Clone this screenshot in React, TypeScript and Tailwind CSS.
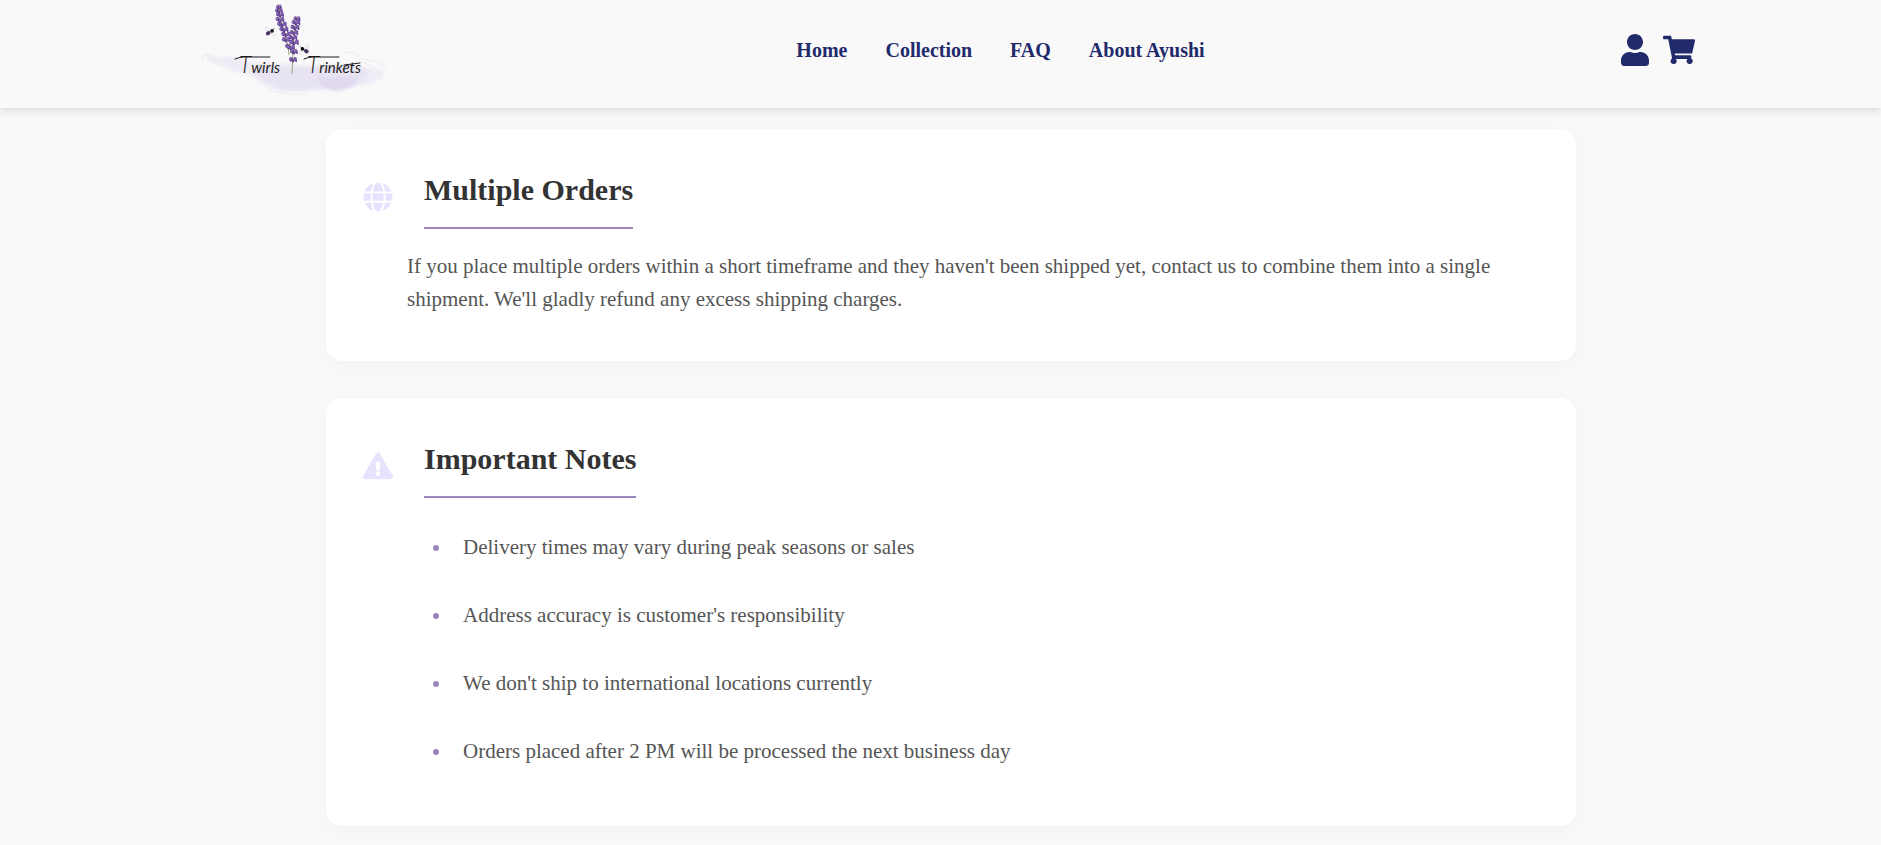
import type { ReactNode } from "react";
import { FaExclamationTriangle, FaGlobe, FaShoppingCart, FaUser } from "react-icons/fa";

const navLinks = ["Home", "Collection", "FAQ", "About Ayushi"];

const notes = [
  "Delivery times may vary during peak seasons or sales",
  "Address accuracy is customer's responsibility",
  "We don't ship to international locations currently",
  "Orders placed after 2 PM will be processed the next business day",
];

// Lavender whorls: centre x, centre y, half width
const whorls: [number, number, number][] = [
  [279, 7, 2.6],
  [279, 11, 3.8],
  [280, 15, 4],
  [280, 20, 4.4],
  [282, 25, 5],
  [284, 30, 4.6],
  [286, 35, 4.8],
  [286, 40, 4.2],
  [288, 46, 2.6],
  [297, 19, 3.4],
  [296, 23, 4.4],
  [295, 28, 4.6],
  [294, 33, 4.4],
  [293, 38, 4.4],
  [294, 43, 5],
  [291, 48, 4],
  [294, 52, 3.8],
  [293, 60, 4],
];

function Bee({ x, y, flip }: { x: number; y: number; flip?: boolean }) {
  return (
    <g transform={`translate(${x} ${y}) scale(${flip ? 1 : -1} 1) rotate(28)`}>
      <ellipse cx="1" cy="-3.6" rx="1.6" ry="3" fill="#f4f2f5" stroke="#d8d5db" strokeWidth="0.5" />
      <ellipse cx="-2" cy="3.6" rx="1.5" ry="3" fill="#f4f2f5" stroke="#d8d5db" strokeWidth="0.5" />
      <ellipse cx="2.2" cy="0.3" rx="2.5" ry="2" fill="#5b4478" />
      <path d="M2.6 -1.4v3.2M1 -1.3v2.8" stroke="#17131f" strokeWidth="0.5" />
      <circle cx="-2.3" cy="0" r="1.8" fill="#121018" />
      <path d="M-3.6 -0.4l-2 -0.8" stroke="#121018" strokeWidth="0.5" />
    </g>
  );
}

function Logo() {
  return (
    <svg viewBox="198 0 196 100" className="h-[100px] w-[196px]" role="img" aria-label="Twirls Trinkets">
      <defs>
        <filter id="wash" x="-10%" y="-10%" width="120%" height="120%">
          <feGaussianBlur stdDeviation="1.4" />
        </filter>
      </defs>
      <g filter="url(#wash)">
        <path
          d="M204 57c5-3 10 0 15 1c7-3 16-2 24 1c8 5 24 4 34 5c14-3 30 3 44 2c14 2 22-3 32 0c12 0 20 4 30 4c2 5 0 8-6 10c-8 6-22 6-31 9c-18-2-32 4-50 3c-14 0-22-1-29-5c-5-3-10-8-18-12c-12-2-22-7-31-10c-8-3-12-5-14-8z"
          fill="#efecf6"
        />
        <path
          d="M252 68c16-4 38 1 60-1c20-3 45-2 54 3c6 7-4 12-16 14c-14 6-24 4-36 4c-17 4-31 3-43-4c-9-4-19-9-19-16z"
          fill="#e7e3f2"
        />
        <path d="M318 76c12 3 28 0 40 3c-2 6-10 11-20 12c-11 0-18-5-20-15z" fill="#e0d9f0" />
      </g>
      <path
        d="M203 62c-4-8 6-9 13-5M342 54c8-4 16-1 19 5c9 1 22 3 26 10M358 60c6 4 12 4 18 8M268 90c14 5 26 4 40 4"
        fill="none"
        stroke="#eeebf5"
        strokeWidth="1"
      />

      <path d="M279 8c1 15 8 26 10 47M297 18c-4 14-4 32-5 56" fill="none" stroke="#9da37c" strokeWidth="1" />
      {whorls.map(([x, y, r]) => (
        <g key={`${x}-${y}`}>
          <ellipse cx={x - r * 0.5} cy={y + 0.3} rx={r * 0.55} ry="2.1" fill="#69479b" transform={`rotate(28 ${x} ${y})`} />
          <ellipse cx={x + r * 0.5} cy={y} rx={r * 0.55} ry="2" fill="#7a5aac" transform={`rotate(-24 ${x} ${y})`} />
          <circle cx={x - r * 0.7} cy={y - 1.2} r="0.9" fill="#9c83c4" />
          <circle cx={x + r * 0.8} cy={y + 1} r="0.9" fill="#56358a" />
          <circle cx={x} cy={y + 1.4} r="1" fill="#452a74" />
          <circle cx={x + 0.4} cy={y - 1.6} r="0.6" fill="#b7a77f" />
        </g>
      ))}
      <Bee x={270} y={32} flip={false} />
      <Bee x={304.5} y={50} flip />

      <g
        fill="#1d1b20"
        fontFamily="Lato, 'Liberation Sans', sans-serif"
        fontStyle="italic"
        fontSize="15"
      >
        <text x="239" y="73">
          <tspan fontSize="23" fontWeight="300">T</tspan>wirls
        </text>
        <text x="307" y="73">
          <tspan fontSize="23" fontWeight="300">T</tspan>rinkets
        </text>
      </g>
      <path
        d="M235 59q4-2 9-2h26M304 59q4-2 9-2h26M344 65l16-2"
        fill="none"
        stroke="#1d1b20"
        strokeWidth="1"
        strokeLinecap="round"
      />
    </svg>
  );
}

function Card({ icon, title, children }: { icon: ReactNode; title: string; children: ReactNode }) {
  return (
    <section className="rounded-2xl bg-white px-[37px] pt-9 pb-[45px] shadow-[0_4px_20px_rgba(0,0,0,0.03)]">
      <div className="flex items-center gap-[31px]">
        <span className="text-[30px] text-[#e8e2ff]">{icon}</span>
        <h2 className="border-b-2 border-[#9b86bd] pt-[3px] pb-[15px] text-[30px] leading-[44px] font-bold text-[#333333]">
          {title}
        </h2>
      </div>
      {children}
    </section>
  );
}

export default function App() {
  return (
    <div className="min-h-screen bg-[#f9f9f9] font-['Liberation_Serif',serif]">
      <header className="relative flex h-[108px] items-center justify-between bg-[#f9f9f9] pr-[186px] pl-[198px] shadow-[0_4px_8px_rgba(0,0,0,0.1)]">
        <a href="#" className="-mr-3 self-start">
          <Logo />
        </a>
        <nav className="mb-2 flex gap-[38px] text-[20px] leading-6 font-bold text-[#212a6b]">
          {navLinks.map((label) => (
            <a key={label} href="#">
              {label}
            </a>
          ))}
        </nav>
        <div className="mb-2 flex items-center gap-3 text-[32px] text-[#212a6b]">
          <a href="#" aria-label="Account">
            <FaUser />
          </a>
          <a href="#" aria-label="Cart">
            <FaShoppingCart />
          </a>
        </div>
      </header>

      <main className="pl-[21px]">
        <div className="mx-auto flex max-w-[1250px] flex-col gap-[37px] pt-[21px] pb-[18px]">
          <Card icon={<FaGlobe />} title="Multiple Orders">
            <p className="mt-[21px] pr-9 pl-11 text-[21px] leading-[33px] text-[#555555]">
              If you place multiple orders within a short timeframe and they haven't been shipped yet, contact us to
              combine them into a single shipment. We'll gladly refund any excess shipping charges.
            </p>
          </Card>
          <Card icon={<FaExclamationTriangle />} title="Important Notes">
            <ul className="mt-[33px] flex flex-col gap-[35px] pb-[13px] pl-[70px] text-[21px] leading-[33px] text-[#555555]">
              {notes.map((note) => (
                <li key={note} className="flex items-center gap-6">
                  <span className="size-[6px] rounded-full bg-[#9b86bd]" />
                  {note}
                </li>
              ))}
            </ul>
          </Card>
        </div>
      </main>
    </div>
  );
}
